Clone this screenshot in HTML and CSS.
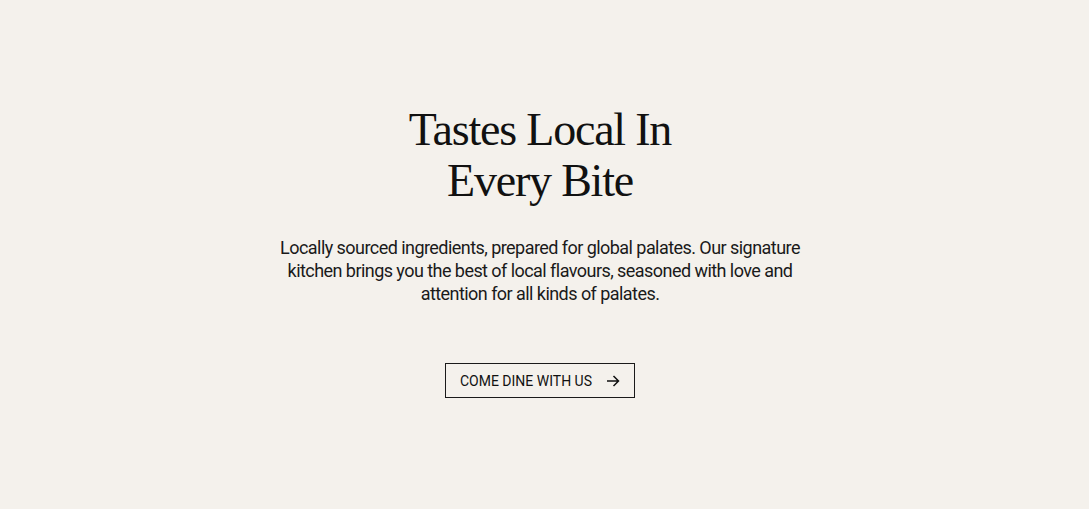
FILE: index.html
```html
<!DOCTYPE html>
<html lang="en">
<head>
<meta charset="utf-8">
<title>Tastes Local In Every Bite</title>
<link rel="stylesheet" href="styles.css">
</head>
<body>
<section class="hero">
  <h1 class="hero-title">Tastes Local In<br>Every Bite</h1>
  <p class="hero-text">Locally sourced ingredients, prepared for global palates. Our signature kitchen brings you the best of local flavours, seasoned with love and attention for all kinds of palates.</p>
  <a class="hero-btn" href="#">COME DINE WITH US
    <svg class="hero-arrow" width="14" height="12" viewBox="0 0 14 12" fill="none" stroke="#111" stroke-width="1.5"><path d="M1 6h11.5M7.5 1l5 5-5 5"/></svg>
  </a>
</section>
</body>
</html>
```
FILE: styles.css
```css
html, body {
  margin: 0;
  padding: 0;
  background: #f4f1ec;
}
.hero {
  box-sizing: border-box;
  width: 1080px;
  height: 509px;
  display: flex;
  flex-direction: column;
  align-items: center;
  padding-top: 104px;
}
.hero-title {
  margin: 0;
  font-family: "Liberation Serif", "Times New Roman", serif;
  font-weight: 400;
  font-size: 46px;
  line-height: 51px;
  letter-spacing: -1.2px;
  color: #111;
  text-align: center;
}
.hero-text {
  margin: 30px 0 0;
  width: 540px;
  font-family: Roboto, "Liberation Sans", sans-serif;
  font-size: 18px;
  line-height: 23px;
  letter-spacing: -0.55px;
  color: #1a1a1a;
  text-align: center;
}
.hero-btn {
  margin-top: 58px;
  box-sizing: border-box;
  width: 190px;
  height: 35px;
  display: flex;
  align-items: center;
  justify-content: center;
  gap: 14px;
  border: 1px solid #1a1a1a;
  font-family: Roboto, "Liberation Sans", sans-serif;
  font-size: 14px;
  color: #111;
  text-decoration: none;
}
.hero-arrow {
  display: block;
}
```
